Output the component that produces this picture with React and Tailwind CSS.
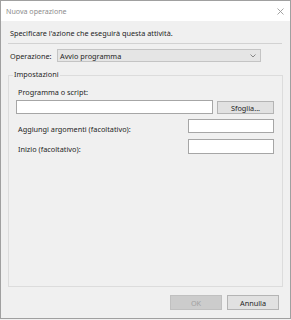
export default function App() {
  const font = { fontFamily: '"Noto Sans", "Open Sans", sans-serif' };
  return (
    <div className="w-[291px] h-[320px] bg-[#f0f0f0]" style={font}>
      <div className="w-[291px] h-[319px] border border-[#a0a0a0] flex flex-col text-[7.3px] leading-[12px] text-[#1e1e1e]">
        <div className="h-[20px] bg-white flex items-center justify-between pl-[5px] pr-[6px] shrink-0">
          <span className="text-[#8c8c8c] text-[7.1px]">Nuova operazione</span>
          <svg width="7" height="7" viewBox="0 0 7 7">
            <path d="M0.5 0.5 L6.5 6.5 M6.5 0.5 L0.5 6.5" stroke="#9a9a9a" strokeWidth="0.9" />
          </svg>
        </div>
        <div className="flex-1 bg-[#f0f0f0] flex flex-col px-[7px]">
          <div className="h-[14px] mt-[5px] flex items-center pl-[2px]">Specificare l'azione che eseguirà questa attività.</div>
          <div className="h-px bg-[#d2d2d2] mt-[3px] mr-[1px]"></div>
          <div className="flex items-center mt-[5px] h-[13px]">
            <span className="pl-[2px] w-[49px]">Operazione:</span>
            <div className="w-[204px] h-[13px] bg-[#e5e5e5] border border-[#c4c4c4] flex items-center justify-between pl-[2px] pr-[4px]">
              <span>Avvio programma</span>
              <svg width="6" height="4" viewBox="0 0 6 4">
                <path d="M0.5 0.5 L3 3 L5.5 0.5" stroke="#7a7a7a" strokeWidth="0.9" fill="none" />
              </svg>
            </div>
          </div>
          <div className="relative mt-[13px] h-[212px] border border-[#dcdcdc]">
            <span className="absolute left-[4px] top-[-8px] bg-[#f0f0f0] px-px">Impostazioni</span>
            <div className="flex flex-col pt-[10px] pl-[7px] pr-[8px]">
              <div className="pl-[2px] h-[12px] flex items-center">Programma o script:</div>
              <div className="flex items-start mt-[2px]">
                <div className="w-[197px] h-[14px] bg-white border border-[#a6a6a6]"></div>
                <div className="ml-[4px] mt-px w-[57px] h-[13px] bg-[#e1e1e1] border border-[#b4b4b4] flex items-center justify-center">Sfoglia...</div>
              </div>
              <div className="flex items-start justify-between mt-[5px]">
                <span className="pl-[2px] mt-[4px] h-[12px]">Aggiungi argomenti (facoltativo):</span>
                <div className="w-[86px] h-[14px] bg-white border border-[#a6a6a6]"></div>
              </div>
              <div className="flex items-start justify-between mt-[4px]">
                <span className="pl-[2px] mt-[4px] h-[12px]">Inizio (facoltativo):</span>
                <div className="w-[86px] h-[15px] bg-white border border-[#a6a6a6]"></div>
              </div>
            </div>
          </div>
          <div className="flex justify-end gap-[5px] mt-[8px] pr-[4px]">
            <div className="w-[52px] h-[15px] bg-[#cccccc] border border-[#c0c0c0] text-[#a0a0a0] flex items-center justify-center">OK</div>
            <div className="w-[52px] h-[15px] bg-[#e1e1e1] border border-[#b4b4b4] flex items-center justify-center">Annulla</div>
          </div>
        </div>
      </div>
    </div>
  );
}
